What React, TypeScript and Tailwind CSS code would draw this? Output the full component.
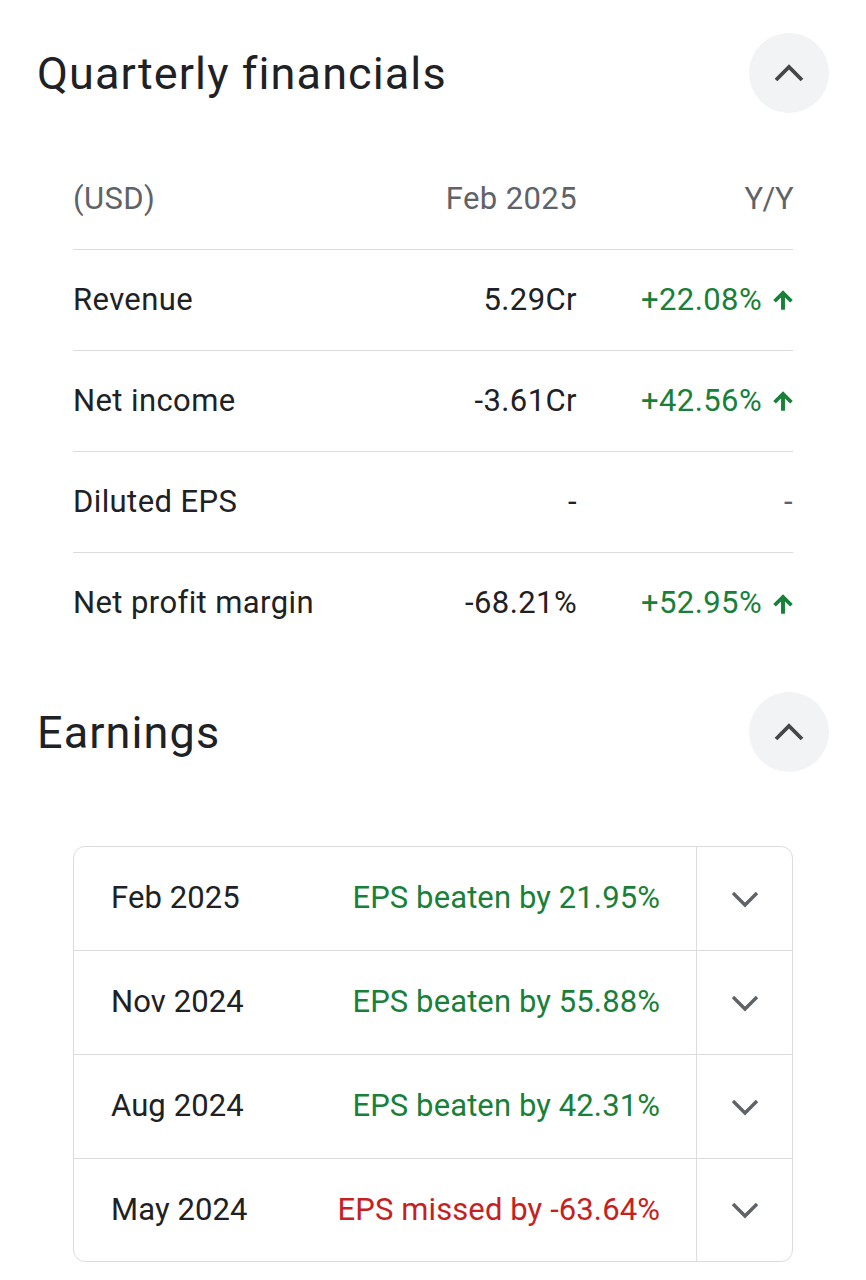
const rows = [
  { name: "Revenue", value: "5.29Cr", change: "+22.08%", up: true },
  { name: "Net income", value: "-3.61Cr", change: "+42.56%", up: true },
  { name: "Diluted EPS", value: "-", change: "-", up: false },
  { name: "Net profit margin", value: "-68.21%", change: "+52.95%", up: true },
];

const earnings = [
  { date: "Feb 2025", text: "EPS beaten by 21.95%", beat: true },
  { date: "Nov 2024", text: "EPS beaten by 55.88%", beat: true },
  { date: "Aug 2024", text: "EPS beaten by 42.31%", beat: true },
  { date: "May 2024", text: "EPS missed by -63.64%", beat: false },
];

function ChevronUp() {
  return (
    <svg width="32" height="32" viewBox="0 0 32 32" fill="none">
      <polyline
        points="3,23 16,10 29,23"
        stroke="#444746"
        strokeWidth="3.8"
        strokeLinejoin="miter"
      />
    </svg>
  );
}

function ChevronDown() {
  return (
    <svg width="30" height="30" viewBox="0 0 30 30" fill="none">
      <polyline
        points="3,9 15,21 27,9"
        stroke="#5f6368"
        strokeWidth="3.4"
        strokeLinejoin="miter"
      />
    </svg>
  );
}

function ArrowUp() {
  return (
    <svg width="26" height="26" viewBox="0 0 24 24" fill="#188038">
      <path d="M12 3 21 12 18.6 14.3 13.8 9.6V21h-3.6V9.6L5.4 14.3 3 12z" />
    </svg>
  );
}

function SectionHeader({ title }: { title: string }) {
  return (
    <div className="flex h-20 items-center justify-between">
      <h2 className="text-[45px] leading-none tracking-[1.1px] text-[#202124]">
        {title}
      </h2>
      <button className="flex h-20 w-20 items-center justify-center rounded-full bg-[#f1f3f4]">
        <ChevronUp />
      </button>
    </div>
  );
}

export default function App() {
  return (
    <div
      className="min-h-screen w-full bg-white pb-10 pl-[37px] pr-[37px] pt-[33px]"
      style={{ fontFamily: "Roboto, 'Liberation Sans', sans-serif" }}
    >
      <SectionHeader title="Quarterly financials" />

      <div className="mx-9 mt-[37px] text-[31px] tracking-[0.4px]">
        <div className="flex h-[100px] items-center border-b border-[#dadce0] text-[#5f6368]">
          <span className="flex-1">(USD)</span>
          <span className="text-right">Feb 2025</span>
          <span className="w-[216px] text-right tracking-[-0.5px]">Y/Y</span>
        </div>
        {rows.map((row, i) => (
          <div
            key={row.name}
            className={`flex h-[101px] items-center text-[#202124] ${
              i < rows.length - 1 ? "border-b border-[#dadce0]" : ""
            }`}
          >
            <span className="flex-1">{row.name}</span>
            <span className="text-right">{row.value}</span>
            <span className="flex w-[216px] items-center justify-end gap-2">
              {row.up ? (
                <>
                  <span className="text-[#188038]">{row.change}</span>
                  <span className="-mr-[3px] flex">
                    <ArrowUp />
                  </span>
                </>
              ) : (
                <span className="text-[#5f6368]">{row.change}</span>
              )}
            </span>
          </div>
        ))}
      </div>

      <div className="mt-[38px]">
        <SectionHeader title="Earnings" />
      </div>

      <div className="mx-9 mt-[74px] overflow-hidden rounded-xl border border-[#dadce0] text-[31px] tracking-[0.1px]">
        {earnings.map((e, i) => (
          <div
            key={e.date}
            className={`flex items-stretch ${
              i < earnings.length - 1
                ? "h-[104px] border-b border-[#dadce0]"
                : "h-[102px]"
            }`}
          >
            <div className="flex flex-1 items-center justify-between pl-[37px] pr-[36px]">
              <span className="text-[#202124]">{e.date}</span>
              <span className={e.beat ? "text-[#188038]" : "text-[#c5221f]"}>
                {e.text}
              </span>
            </div>
            <div className="flex w-[96px] items-center justify-center border-l border-[#dadce0]">
              <ChevronDown />
            </div>
          </div>
        ))}
      </div>
    </div>
  );
}
